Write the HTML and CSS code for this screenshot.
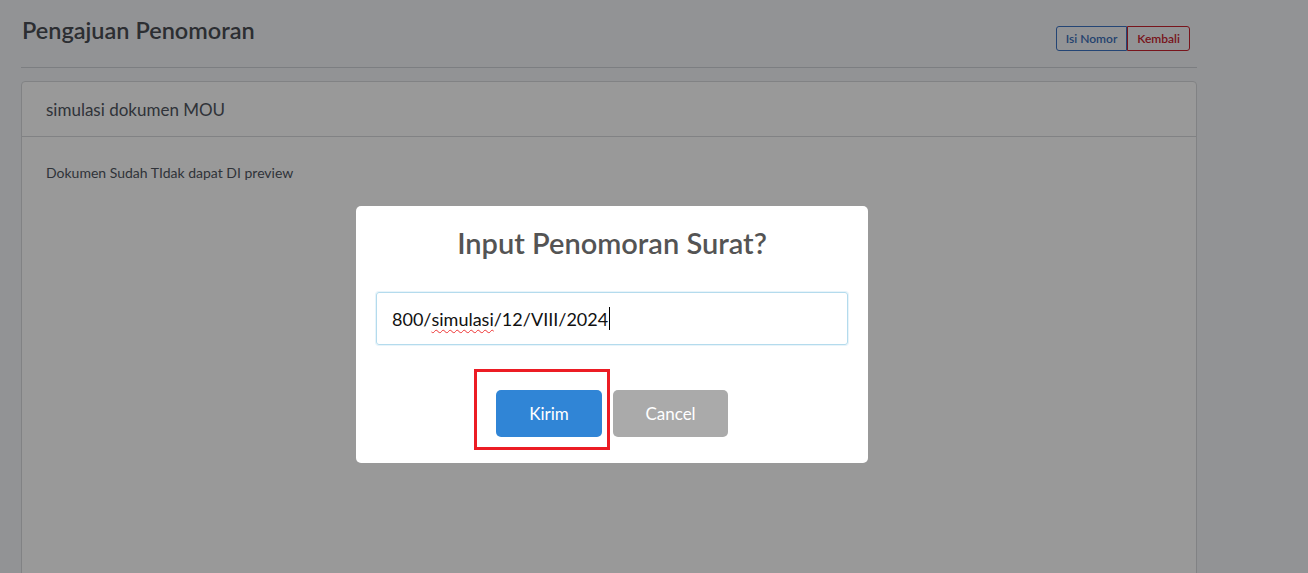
FILE: index.html
```html
<!DOCTYPE html>
<html lang="id">
<head>
    <meta charset="UTF-8">
    <meta name="viewport" content="width=device-width, initial-scale=1.0">
    <title>Pengajuan Penomoran</title>
    <link rel="stylesheet" href="styles.css">
</head>
<body>
    <div class="page">
        <div class="content-header">
            <h1>Pengajuan Penomoran</h1>
            <div class="btn-group">
                <a class="btn btn-outline-primary">Isi Nomor</a>
                <a class="btn btn-outline-danger">Kembali</a>
            </div>
        </div>

        <div class="card">
            <div class="card-header">simulasi dokumen MOU</div>
            <div class="card-body">
                <p>Dokumen Sudah TIdak dapat DI preview</p>
            </div>
        </div>
    </div>

    <!-- SweetAlert popup -->
    <div class="swal-overlay">
        <div class="swal-popup">
            <h2 class="swal-title">Input Penomoran Surat?</h2>
            <div class="swal-input">800/<span class="typo">simulasi</span>/12/VIII/2024<span class="caret"></span></div>
            <div class="swal-actions">
                <button class="swal-btn swal-confirm">Kirim<span class="mark-box"></span></button>
                <button class="swal-btn swal-cancel">Cancel</button>
            </div>
        </div>
    </div>
</body>
</html>
```

FILE: styles.css
```css
:root {
    --page-bg: #f4f6f9;
    --text-color: #585a61;
}

body {
    margin: 0;
    padding: 0;
    font-family: 'Lato', 'Liberation Sans', sans-serif;
    background-color: var(--page-bg);
    color: var(--text-color);
    overflow: hidden;
}

.page {
    width: 1176px;
    padding-left: 21px;
}

.content-header {
    display: flex;
    justify-content: space-between;
    align-items: flex-start;
    height: 68px;
    box-sizing: border-box;
    padding: 16px 7px 0 0;
    border-bottom: 1px solid #cfd3d8;
}

.content-header h1 {
    margin: 0 0 0 1px;
    font-size: 23.5px;
    line-height: 29px;
    font-weight: 600;
    color: #4a4d54;
}

.btn-group {
    display: flex;
    margin-top: 10px;
}

.btn {
    display: block;
    height: 25px;
    box-sizing: border-box;
    padding: 0 9px;
    font-size: 12px;
    line-height: 23px;
    font-weight: 600;
    background: transparent;
    border: 1px solid;
    cursor: pointer;
}

.btn-outline-primary {
    color: #3d6fb8;
    border-color: #3d73c4;
    border-radius: 3px 0 0 3px;
}

.btn-outline-danger {
    color: #c8232f;
    border-color: #c8232f;
    border-radius: 0 3px 3px 0;
}

.card {
    margin-top: 13px;
    height: 520px;
    background-color: #fff;
    border: 1px solid #d7d9dc;
    border-radius: 4px;
}

.card-header {
    padding: 15px 24px 13px;
    font-size: 17px;
    line-height: 26px;
    color: #505660;
    border-bottom: 1px solid #d7d9dc;
}

.card-body {
    padding: 25px 24px;
}

.card-body p {
    margin: 0;
    font-size: 14px;
    line-height: 21px;
    color: #505660;
}

/* SweetAlert */
.swal-overlay {
    position: fixed;
    top: 0;
    left: 0;
    width: 100%;
    height: 100%;
    background-color: rgba(0, 0, 0, 0.4);
    display: flex;
    align-items: flex-start;
    padding: 206px 0 0 356px;
    box-sizing: border-box;
}

.swal-popup {
    width: 512px;
    height: 257px;
    box-sizing: border-box;
    background-color: #fff;
    border-radius: 5px;
    padding-top: 19px;
}

.swal-title {
    margin: 0;
    text-align: center;
    font-size: 29px;
    line-height: 36px;
    font-weight: 600;
    color: #545454;
}

.swal-input {
    margin: 31px 20px 0;
    height: 53px;
    box-sizing: border-box;
    border: 1px solid #b4dbed;
    border-radius: 3px;
    padding-left: 15px;
    display: flex;
    align-items: center;
    font-size: 18px;
    color: #111;
    box-shadow: 0 0 0 1px rgba(180, 219, 237, 0.3);
}

.typo {
    text-decoration: underline wavy #e33;
    text-decoration-thickness: 1px;
    text-underline-offset: 3px;
}

.caret {
    display: inline-block;
    width: 1px;
    height: 23px;
    margin-left: 1px;
    background-color: #000;
}

.swal-actions {
    display: flex;
    justify-content: center;
    gap: 11px;
    margin-top: 45px;
}

.swal-btn {
    height: 47px;
    border: 0;
    border-radius: 5px;
    color: #fff;
    font-family: inherit;
    font-size: 17px;
    cursor: pointer;
}

.swal-confirm {
    position: relative;
    width: 106px;
    background-color: #3085d6;
}

.swal-cancel {
    width: 115px;
    background-color: #aaa;
}

.mark-box {
    position: absolute;
    left: -22px;
    top: -21px;
    width: 136px;
    height: 81px;
    box-sizing: border-box;
    border: 3px solid #ec1c24;
}
```
